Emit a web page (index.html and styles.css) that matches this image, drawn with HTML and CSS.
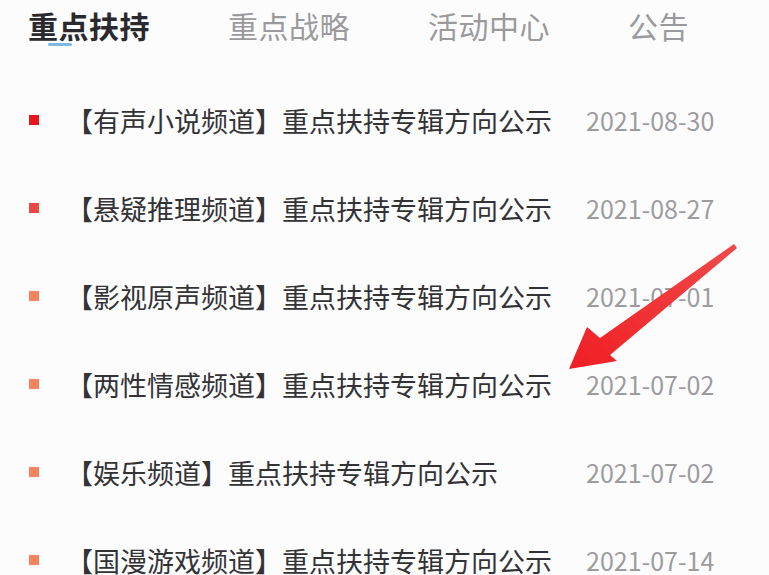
FILE: index.html
```html
<!DOCTYPE html>
<html lang="zh">
<head>
<meta charset="utf-8">
<link rel="stylesheet" href="styles.css">
</head>
<body>
<div class="page">
  <nav class="tabs">
    <div class="tab active"><span class="tab-label">重点扶持</span><span class="underline"></span></div>
    <div class="tab"><span class="tab-label">重点战略</span></div>
    <div class="tab"><span class="tab-label">活动中心</span></div>
    <div class="tab"><span class="tab-label">公告</span></div>
  </nav>
  <ul class="list">
    <li class="row"><span class="dot dot-1"></span><span class="title">【有声小说频道】重点扶持专辑方向公示</span><span class="date">2021-08-30</span></li>
    <li class="row"><span class="dot dot-2"></span><span class="title">【悬疑推理频道】重点扶持专辑方向公示</span><span class="date">2021-08-27</span></li>
    <li class="row"><span class="dot dot-3"></span><span class="title">【影视原声频道】重点扶持专辑方向公示</span><span class="date">2021-07-01</span></li>
    <li class="row"><span class="dot dot-3"></span><span class="title">【两性情感频道】重点扶持专辑方向公示</span><span class="date">2021-07-02</span></li>
    <li class="row"><span class="dot dot-3"></span><span class="title">【娱乐频道】重点扶持专辑方向公示</span><span class="date">2021-07-02</span></li>
    <li class="row"><span class="dot dot-3"></span><span class="title">【国漫游戏频道】重点扶持专辑方向公示</span><span class="date">2021-07-14</span></li>
  </ul>
  <svg class="arrow" viewBox="0 0 769 575" width="769" height="575">
    <defs>
      <linearGradient id="ag" x1="1" y1="0" x2="0" y2="1">
        <stop offset="0" stop-color="#f04a4a"/>
        <stop offset="1" stop-color="#f01e24"/>
      </linearGradient>
    </defs>
    <polygon points="569,369 587,327 600,338 734,244 737,248 610,355 617,361" fill="url(#ag)"/>
  </svg>
</div>
</body>
</html>
```
FILE: styles.css
```css
html, body {
  margin: 0;
  padding: 0;
  background: #fcfcfd;
}
.page {
  position: relative;
  width: 769px;
  height: 575px;
  overflow: hidden;
  font-family: "Noto Sans CJK SC", "Noto Sans", sans-serif;
}
.tabs {
  display: flex;
  padding-left: 28px;
  padding-top: 6px;
  height: 70px;
  box-sizing: border-box;
}
.tab {
  width: 200px;
  flex: 0 0 200px;
  display: flex;
  flex-direction: column;
  align-items: flex-start;
}
.tab-label {
  font-size: 30px;
  line-height: 38px;
  color: #9a9a9c;
  letter-spacing: 0.5px;
  white-space: nowrap;
}
.tab.active .tab-label {
  color: #2a2a2e;
  font-weight: bold;
}
.underline {
  display: block;
  width: 24px;
  height: 3px;
  margin-left: 20px;
  margin-top: -1px;
  background: #7db7e3;
  border-radius: 2px;
}
.list {
  list-style: none;
  margin: 6px 0 0 0;
  padding: 0;
}
.row {
  height: 88px;
  display: flex;
  align-items: center;
  padding-left: 29px;
}
.dot {
  width: 10px;
  height: 10px;
  flex: 0 0 10px;
  margin-right: 27px;
}
.dot-1 { background: #e8161d; }
.dot-2 { background: #ec4646; }
.dot-3 { background: #f5855e; }
.title {
  flex: 0 0 520px;
  font-size: 27px;
  color: #333336;
  white-space: nowrap;
}
.date {
  font-size: 25px;
  color: #9c9ca0;
}
.arrow {
  position: absolute;
  left: 0;
  top: 0;
  pointer-events: none;
}
```
